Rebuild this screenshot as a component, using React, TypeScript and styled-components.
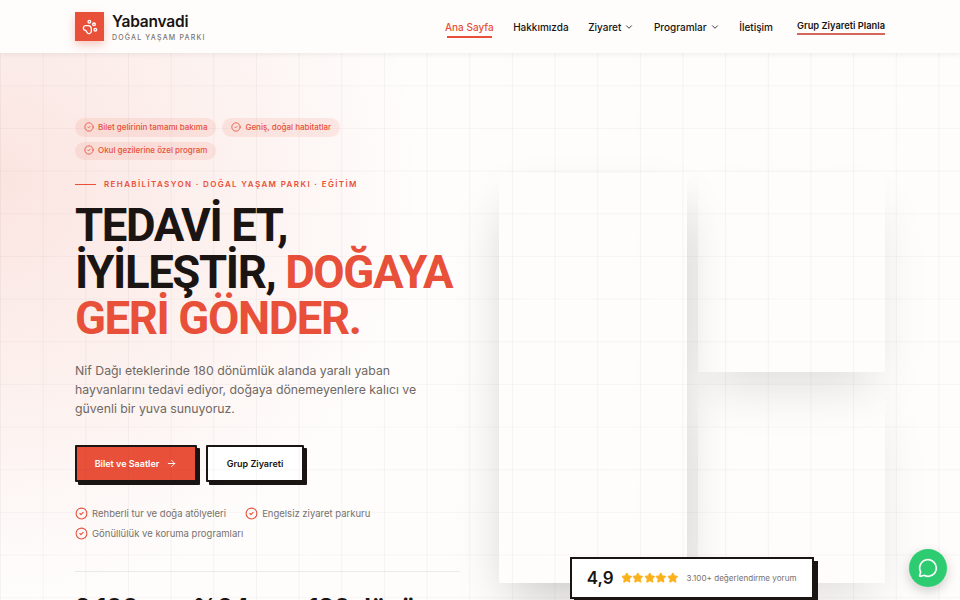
import styled, { createGlobalStyle } from "styled-components"
import { ArrowRight, ChevronDown, CircleCheck, MessageCircle, PawPrint, Star } from "lucide-react"

const red = "#e8503a"
const ink = "#1a1412"
const sans = `"Inter", "Liberation Sans", sans-serif`

const GlobalStyle = createGlobalStyle`
  html, body {
    margin: 0;
    height: 100%;
    overflow: hidden;
    background: #fefdfc;
    font-family: ${sans};
    color: ${ink};
  }
  * { box-sizing: border-box; }
`

const navItems = [
    { label: "Ana Sayfa", active: true },
    { label: "Hakkımızda" },
    { label: "Ziyaret", menu: true },
    { label: "Programlar", menu: true },
    { label: "İletişim" },
]

const badges = ["Bilet gelirinin tamamı bakıma", "Geniş, doğal habitatlar", "Okul gezilerine özel program"]
const features = ["Rehberli tur ve doğa atölyeleri", "Engelsiz ziyaret parkuru", "Gönüllülük ve koruma programları"]
const stats = ["3.100+", "%94", "180 dönüm"]

export default function App() {
    return (
        <Page>
            <GlobalStyle />
            <GridOverlay />
            <Header>
                <Brand>
                    <LogoBox>
                        <PawPrint size={16} color="#fff" strokeWidth={2} />
                    </LogoBox>
                    <BrandText>
                        <BrandName>Yabanvadi</BrandName>
                        <BrandTag>DOĞAL YAŞAM PARKI</BrandTag>
                    </BrandText>
                </Brand>
                <Nav>
                    {navItems.map((item) => (
                        <NavLink key={item.label} $active={item.active}>
                            {item.label}
                            {item.menu && <ChevronDown size={10} strokeWidth={2} />}
                        </NavLink>
                    ))}
                    <NavCta>Grup Ziyareti Planla</NavCta>
                </Nav>
            </Header>
            <Hero>
                <Left>
                    <Badges>
                        {badges.map((b) => (
                            <Badge key={b}>
                                <CircleCheck size={10} strokeWidth={2} />
                                {b}
                            </Badge>
                        ))}
                    </Badges>
                    <Eyebrow>
                        <EyebrowLine />
                        REHABİLİTASYON · DOĞAL YAŞAM PARKI · EĞİTİM
                    </Eyebrow>
                    <Title>
                        TEDAVİ ET,
                        <br />
                        İYİLEŞTİR, <Accent>DOĞAYA</Accent>
                        <br />
                        <Accent>GERİ GÖNDER.</Accent>
                    </Title>
                    <Lead>
                        Nif Dağı eteklerinde 180 dönümlük alanda yaralı yaban
                        <br />
                        hayvanlarını tedavi ediyor, doğaya dönemeyenlere kalıcı ve
                        <br />
                        güvenli bir yuva sunuyoruz.
                    </Lead>
                    <Actions>
                        <PrimaryButton>
                            Bilet ve Saatler
                            <ArrowRight size={11} strokeWidth={2} />
                        </PrimaryButton>
                        <SecondaryButton>Grup Ziyareti</SecondaryButton>
                    </Actions>
                    <Features>
                        {features.map((f) => (
                            <Feature key={f}>
                                <CircleCheck size={13} color={red} strokeWidth={2} />
                                {f}
                            </Feature>
                        ))}
                    </Features>
                    <Stats>
                        {stats.map((s) => (
                            <StatValue key={s}>{s}</StatValue>
                        ))}
                    </Stats>
                </Left>
                <Gallery>
                    <TallCard />
                    <TopCard />
                    <BottomCard />
                    <RatingCard>
                        <RatingValue>4,9</RatingValue>
                        <StarRow>
                            {[0, 1, 2, 3, 4].map((i) => (
                                <Star key={i} size={11.6} color="#fbb11c" fill="#fbb11c" />
                            ))}
                        </StarRow>
                        <RatingText>3.100+ değerlendirme yorum</RatingText>
                    </RatingCard>
                </Gallery>
            </Hero>
            <ChatButton>
                <MessageCircle size={20} color="#fff" strokeWidth={2} />
            </ChatButton>
        </Page>
    )
}

const Page = styled.div`
  position: relative;
  height: 100vh;
  overflow: hidden;
  background:
    radial-gradient(ellipse 420px 420px at 0% 30%, rgba(232, 80, 58, 0.14), rgba(232, 80, 58, 0) 100%),
    #fefdfc;
`

const GridOverlay = styled.div`
  position: absolute;
  inset: 0;
  z-index: 5;
  pointer-events: none;
  background-image:
    linear-gradient(to right, rgba(26, 20, 18, 0.04) 1px, transparent 1px),
    linear-gradient(to bottom, rgba(26, 20, 18, 0.03) 1px, transparent 1px);
  background-size: 42.67px 42.67px;
`

const Header = styled.header`
  position: relative;
  z-index: 10;
  height: 53px;
  padding: 0 75px;
  display: flex;
  align-items: center;
  justify-content: space-between;
  background: #fefdfc;
  box-shadow: 0 1px 6px rgba(26, 20, 18, 0.08);
`

const Brand = styled.div`
  display: flex;
  align-items: center;
  gap: 8px;
`

const LogoBox = styled.div`
  width: 29px;
  height: 29px;
  display: flex;
  align-items: center;
  justify-content: center;
  background: ${red};
  box-shadow: 0 4px 10px rgba(232, 80, 58, 0.3);
`

const BrandText = styled.div`
  display: flex;
  flex-direction: column;
  gap: 2px;
  padding-top: 2px;
`

const BrandName = styled.div`
  font-size: 15.5px;
  line-height: 19px;
  font-weight: 600;
  letter-spacing: -0.2px;
`

const BrandTag = styled.div`
  font-size: 7px;
  line-height: 10px;
  font-weight: 500;
  letter-spacing: 1.18px;
  color: #7a7370;
`

const Nav = styled.nav`
  display: flex;
  align-items: center;
  gap: 19.5px;
`

const NavLink = styled.a<{ $active?: boolean }>`
  position: relative;
  display: flex;
  align-items: center;
  gap: 3px;
  font-size: 10px;
  line-height: 14px;
  font-weight: 500;
  color: ${(p) => (p.$active ? red : ink)};

  &::after {
    content: "";
    display: ${(p) => (p.$active ? "block" : "none")};
    position: absolute;
    left: 2px;
    right: 2px;
    bottom: -4px;
    height: 1.5px;
    background: ${red};
  }
`

const NavCta = styled.a`
  margin-left: 4.5px;
  padding-bottom: 1px;
  font-size: 9.3px;
  line-height: 13px;
  font-weight: 600;
  border-bottom: 2px solid #d4675a;
`

const Hero = styled.main`
  display: grid;
  grid-template-columns: 385px 386.5px;
  justify-content: space-between;
  align-items: start;
  padding: 65px 75px 0;
`

const Left = styled.div`
  display: flex;
  flex-direction: column;
  align-items: flex-start;
`

const Badges = styled.div`
  display: flex;
  flex-wrap: wrap;
  gap: 5px 6px;
`

const Badge = styled.div`
  height: 18.5px;
  padding: 0 9px 1px 9px;
  display: flex;
  align-items: center;
  gap: 4px;
  border-radius: 10px;
  font-size: 8px;
  font-weight: 500;
  color: ${red};
  background: rgba(232, 80, 58, 0.1);
`

const Eyebrow = styled.div`
  margin-top: 18px;
  display: flex;
  align-items: center;
  gap: 8px;
  font-size: 8px;
  line-height: 12px;
  font-weight: 600;
  letter-spacing: 1.37px;
  color: ${red};
`

const EyebrowLine = styled.span`
  width: 21px;
  height: 1px;
  background: ${red};
`

const Title = styled.h1`
  margin: 13px 0 0;
  font-family: "Roboto", "Liberation Sans", sans-serif;
  font-size: 45.5px;
  line-height: 46.5px;
  font-weight: 700;
  letter-spacing: -1.4px;
  white-space: nowrap;
`

const Accent = styled.span`
  color: ${red};
`

const Lead = styled.p`
  margin: 18px 0 0;
  font-size: 12.3px;
  line-height: 19.4px;
  color: #6f6864;
  white-space: nowrap;
`

const Actions = styled.div`
  margin-top: 26px;
  display: flex;
  gap: 9px;
`

const PrimaryButton = styled.a`
  width: 122px;
  height: 37px;
  display: flex;
  align-items: center;
  justify-content: center;
  gap: 7px;
  font-size: 9px;
  font-weight: 600;
  color: #fff;
  background: ${red};
  border: 2px solid ${ink};
  border-radius: 1px;
  box-shadow: 3px 3px 0 ${ink};
`

const SecondaryButton = styled(PrimaryButton)`
  width: 98px;
  color: ${ink};
  background: #fff;
`

const Features = styled.div`
  margin-top: 25px;
  width: 320px;
  display: flex;
  flex-wrap: wrap;
  gap: 7px 19px;
`

const Feature = styled.div`
  height: 13px;
  display: flex;
  align-items: center;
  gap: 4px;
  font-size: 9.5px;
  color: #78716d;
`

const Stats = styled.div`
  margin-top: 31px;
  width: 100%;
  padding-top: 22px;
  display: grid;
  grid-template-columns: 118px 115px 1fr;
  border-top: 1px solid rgba(26, 20, 18, 0.08);
`

const StatValue = styled.div`
  font-size: 24px;
  line-height: 28px;
  font-weight: 700;
`

const Gallery = styled.div`
  position: relative;
  margin-top: 55px;
  height: 410px;
  display: grid;
  grid-template-columns: 188.5px 1fr;
  grid-template-rows: 199px 199px;
  gap: 12px 11px;
`

const Card = styled.div`
  position: relative;
  background: #fefdfc;
  box-shadow: 0 25px 50px -12px rgba(0, 0, 0, 0.13);
`

const TallCard = styled(Card)`
  grid-row: span 2;
  z-index: 3;
  box-shadow: 0 25px 50px -12px rgba(0, 0, 0, 0.22);
`

const TopCard = styled(Card)`
  z-index: 2;
`

const BottomCard = styled(Card)`
  z-index: 1;
`

const RatingCard = styled.div`
  position: absolute;
  left: 50%;
  bottom: -16px;
  z-index: 7;
  width: 244px;
  height: 42px;
  transform: translateX(-50%);
  padding: 0 15px;
  display: flex;
  align-items: center;
  white-space: nowrap;
  background: #fff;
  border: 2px solid ${ink};
  box-shadow: 4px 4px 0 ${ink};
`

const RatingValue = styled.div`
  font-size: 17px;
  font-weight: 600;
`

const StarRow = styled.div`
  margin-left: 7px;
  display: flex;
`

const RatingText = styled.div`
  margin-left: 8px;
  font-size: 8.1px;
  color: #78716d;
`

const ChatButton = styled.a`
  position: fixed;
  left: 909px;
  top: 549px;
  z-index: 20;
  width: 38px;
  height: 38px;
  display: flex;
  align-items: center;
  justify-content: center;
  border-radius: 50%;
  background: #2ecc71;
  box-shadow: 0 4px 12px rgba(0, 0, 0, 0.2);
`
